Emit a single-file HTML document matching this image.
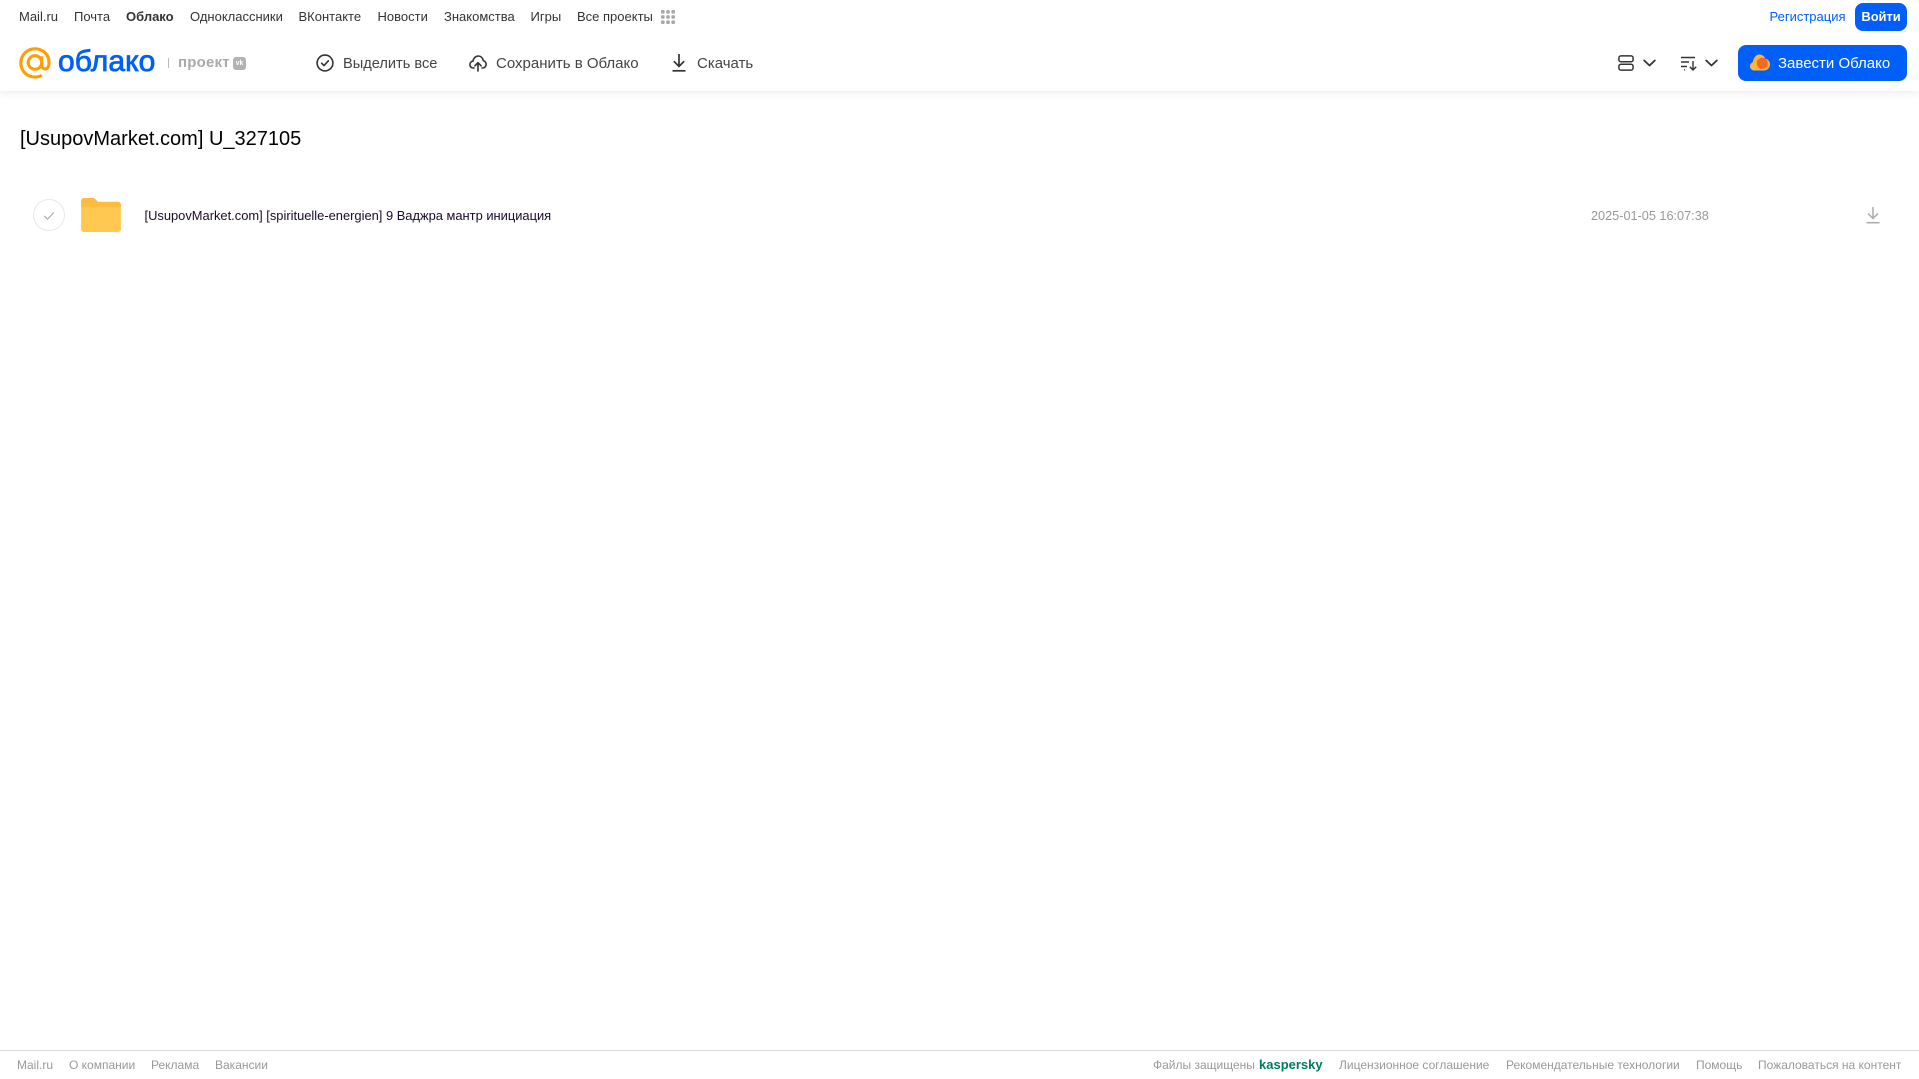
<!DOCTYPE html>
<html lang="ru">
<head>
<meta charset="utf-8">
<title>Облако</title>
<style>
html,body{margin:0;padding:0;background:#fff;}
body{width:1919px;height:1079px;position:relative;overflow:hidden;font-family:"Liberation Sans",sans-serif;}
.t{position:absolute;white-space:nowrap;line-height:20px;}
.n{top:7px;font-size:13px;color:#333;}
.b{top:54px;font-size:15px;color:#444;}
.f{top:1055px;font-size:12px;color:#999;}
svg{position:absolute;display:block;}
#hd{position:absolute;left:0;top:0;width:1919px;height:91px;background:#fff;box-shadow:0 2px 8px rgba(0,0,0,.08);}
#ft{position:absolute;left:0;top:1050px;width:1919px;height:1px;background:#d9d9d9;}
.btn{position:absolute;background:#005ff9;border-radius:8px;}
</style>
</head>
<body>
<div id="hd"></div>
<span class="t n" style="left:19px">Mail.ru</span>
<span class="t n" style="left:74px">Почта</span>
<span class="t n" style="left:126px;font-weight:bold">Облако</span>
<span class="t n" style="left:190px">Одноклассники</span>
<span class="t n" style="left:298.500px">ВКонтакте</span>
<span class="t n" style="left:377.500px">Новости</span>
<span class="t n" style="left:444px">Знакомства</span>
<span class="t n" style="left:530.500px">Игры</span>
<span class="t n" style="left:577px">Все проекты</span>
<svg style="left:661px;top:10px" width="14" height="14" viewBox="0 0 14 14" fill="#a8a8a8"><rect x="0" y="0" width="3.6" height="3.6" rx="1"/><rect x="5.2" y="0" width="3.6" height="3.6" rx="1"/><rect x="10.4" y="0" width="3.6" height="3.6" rx="1"/><rect x="0" y="5.2" width="3.6" height="3.6" rx="1"/><rect x="5.2" y="5.2" width="3.6" height="3.6" rx="1"/><rect x="10.4" y="5.2" width="3.6" height="3.6" rx="1"/><rect x="0" y="10.4" width="3.6" height="3.6" rx="1"/><rect x="5.2" y="10.4" width="3.6" height="3.6" rx="1"/><rect x="10.4" y="10.4" width="3.6" height="3.6" rx="1"/></svg>

<!-- logo -->
<svg style="left:19px;top:47px" width="32" height="32" viewBox="0 0 33 33" fill="none" stroke="#ff9e00" stroke-width="3.2"><circle cx="16.5" cy="16" r="7"/><path d="M23.500 9.500v8.500c0 3 1.600 4.600 3.600 4.600s3.900-2 3.900-6.600C31 7.600 24.500 1.800 16.500 1.800S1.900 8.200 1.900 16.500 8.300 31 16.500 31c2.800 0 5-.6 7-1.800"/></svg>
<span class="t" style="left:58px;top:42px;font-size:30px;line-height:40px;color:#005ff9;-webkit-text-stroke:.8px #005ff9;letter-spacing:.1px">облако</span>
<div style="position:absolute;left:168px;top:58px;width:1px;height:10px;background:#bbb"></div>
<span class="t" style="left:178px;top:53px;font-size:15px;color:#aaa;font-weight:bold;letter-spacing:.2px">проект</span>
<div style="position:absolute;left:233px;top:57px;width:13px;height:13px;border-radius:3px;background:#b2b2b2"></div>
<span class="t" style="left:233px;top:57px;width:13px;font-size:7px;line-height:13px;color:#fff;font-weight:bold;text-align:center">vk</span>

<!-- toolbar -->
<svg style="left:316px;top:54px" width="18" height="18" viewBox="0 0 18 18" fill="none" stroke="#333" stroke-width="1.6"><circle cx="9" cy="9" r="7.900"/><path d="M5.600 9.200l2.400 2.400 4.400-4.800" stroke-linecap="round" stroke-linejoin="round"/></svg>
<span class="t b" style="left:343px;font-size:14.600px">Выделить все</span>
<svg style="left:469px;top:55px" width="18" height="17" viewBox="0 0 18 17" fill="none" stroke="#333" stroke-width="1.6" stroke-linecap="round" stroke-linejoin="round"><path d="M5 13H4.500C2.300 13 .9 11.500 .9 9.600c0-1.800 1.300-3.200 3-3.400C4.400 3.300 6.500 1 9.200 1c2.600 0 4.800 2 5.100 4.700 1.600.4 2.800 1.900 2.800 3.700 0 2-1.500 3.600-3.600 3.600H13"/><path d="M9 16V8M5.900 10.800L9 7.700l3.100 3.100"/></svg>
<span class="t b" style="left:496px">Сохранить в Облако</span>
<svg style="left:672px;top:54px" width="14" height="18" viewBox="0 0 14 18" fill="none" stroke="#333" stroke-width="1.7"><path d="M7 0v12M1.800 7.200L7 12.400l5.200-5.200"/><path d="M.5 16.800h13"/></svg>
<span class="t b" style="left:697px">Скачать</span>

<!-- right -->
<span class="t n" style="left:1769.500px;color:#005ff9">Регистрация</span>
<div class="btn" style="left:1855px;top:3px;width:52px;height:28px"></div>
<span class="t" style="left:1855px;top:7px;width:52px;text-align:center;font-size:13px;color:#fff;font-weight:bold;letter-spacing:-.1px">Войти</span>

<svg style="left:1618px;top:55px" width="16" height="16" viewBox="0 0 16 16" fill="none" stroke="#333" stroke-width="1.5"><rect x=".9" y=".9" width="14.200" height="5.800" rx="2"/><rect x=".9" y="9.300" width="14.200" height="5.800" rx="2"/></svg>
<svg style="left:1643px;top:59px" width="13" height="8" viewBox="0 0 13 8" fill="none" stroke="#333" stroke-width="1.8" stroke-linecap="round" stroke-linejoin="round"><path d="M1.200 1.500l5.300 5 5.300-5"/></svg>
<svg style="left:1681px;top:56px" width="16" height="15" viewBox="0 0 16 15" fill="none" stroke="#333" stroke-width="1.4"><path d="M0 1.500h14M0 6h8M0 10.500h6M3 13.800h1"/><path d="M12 5v9M8.800 10.800l3.200 3.200 3.200-3.200"/></svg>
<svg style="left:1705px;top:59px" width="13" height="8" viewBox="0 0 13 8" fill="none" stroke="#333" stroke-width="1.8" stroke-linecap="round" stroke-linejoin="round"><path d="M1.200 1.500l5.300 5 5.300-5"/></svg>

<div class="btn" style="left:1738px;top:45px;width:169px;height:36px"></div>
<svg style="left:1750px;top:54px" width="20" height="17" viewBox="0 0 20 17"><path d="M4.500 16.500C2 16.500 0 14.600 0 12.200c0-2 1.300-3.600 3-4.200C3.400 3.500 6.200.5 9.500.5c2.700 0 5 1.800 5.800 4.300 2.700.3 4.700 2.700 4.700 5.600 0 3.400-2.700 6.100-6 6.100z" fill="#ffb53b"/><circle cx="12.300" cy="9.300" r="5.500" fill="#f4691f"/></svg>
<span class="t" style="left:1778px;top:54px;font-size:15px;color:#fff">Завести Облако</span>

<!-- content -->
<span class="t" style="left:20px;top:125px;font-size:20px;line-height:28px;color:#000">[UsupovMarket.com] U_327105</span>

<div style="position:absolute;left:33px;top:199px;width:32px;height:32px;border:1px solid #e8e8e8;border-radius:50%;box-sizing:border-box"></div>
<svg style="left:43px;top:211px" width="12" height="10" viewBox="0 0 12 10" fill="none" stroke="#aaa" stroke-width="1.100" stroke-linecap="round" stroke-linejoin="round"><path d="M1.500 5.200l3 3 6-6.500"/></svg>

<svg style="left:81px;top:198px" width="40" height="34" viewBox="0 0 41 35"><path d="M0 3C0 1.300 1.300 0 3 0h9c1.200 0 2.200.5 3 1.500L17.500 4H38c1.700 0 3 1.300 3 3v25c0 1.700-1.300 3-3 3H3c-1.700 0-3-1.300-3-3z" fill="#ffc850"/><path d="M0 3C0 1.300 1.300 0 3 0h9c1.200 0 2.200.5 3 1.500L17.500 4H38c1.700 0 3 1.300 3 3v2H0z" fill="#ffbb3f"/></svg>

<span class="t" style="left:144.500px;top:206px;font-size:12.900px;color:#1a0a2b">[UsupovMarket.com] [spirituelle-energien] 9 Ваджра мантр инициация</span>
<span class="t" style="left:1591px;top:206px;font-size:12.700px;color:#999">2025-01-05 16:07:38</span>
<svg style="left:1866px;top:207px" width="14" height="17" viewBox="0 0 14 17" fill="none" stroke="#aaa" stroke-width="1.500"><path d="M7 0v11M2 6.500l5 5 5-5"/><path d="M.5 15.700h13"/></svg>

<!-- footer -->
<div id="ft"></div>
<span class="t f" style="left:17px">Mail.ru</span>
<span class="t f" style="left:69px">О компании</span>
<span class="t f" style="left:151px">Реклама</span>
<span class="t f" style="left:215px">Вакансии</span>
<span class="t f" style="left:1153px">Файлы защищены</span>
<span class="t f" style="left:1259px;color:#007a5e;font-weight:bold;font-size:13px">kaspersky</span>
<span class="t f" style="left:1339px">Лицензионное соглашение</span>
<span class="t f" style="left:1506px">Рекомендательные технологии</span>
<span class="t f" style="left:1696px">Помощь</span>
<span class="t f" style="left:1758px">Пожаловаться на контент</span>
</body>
</html>
